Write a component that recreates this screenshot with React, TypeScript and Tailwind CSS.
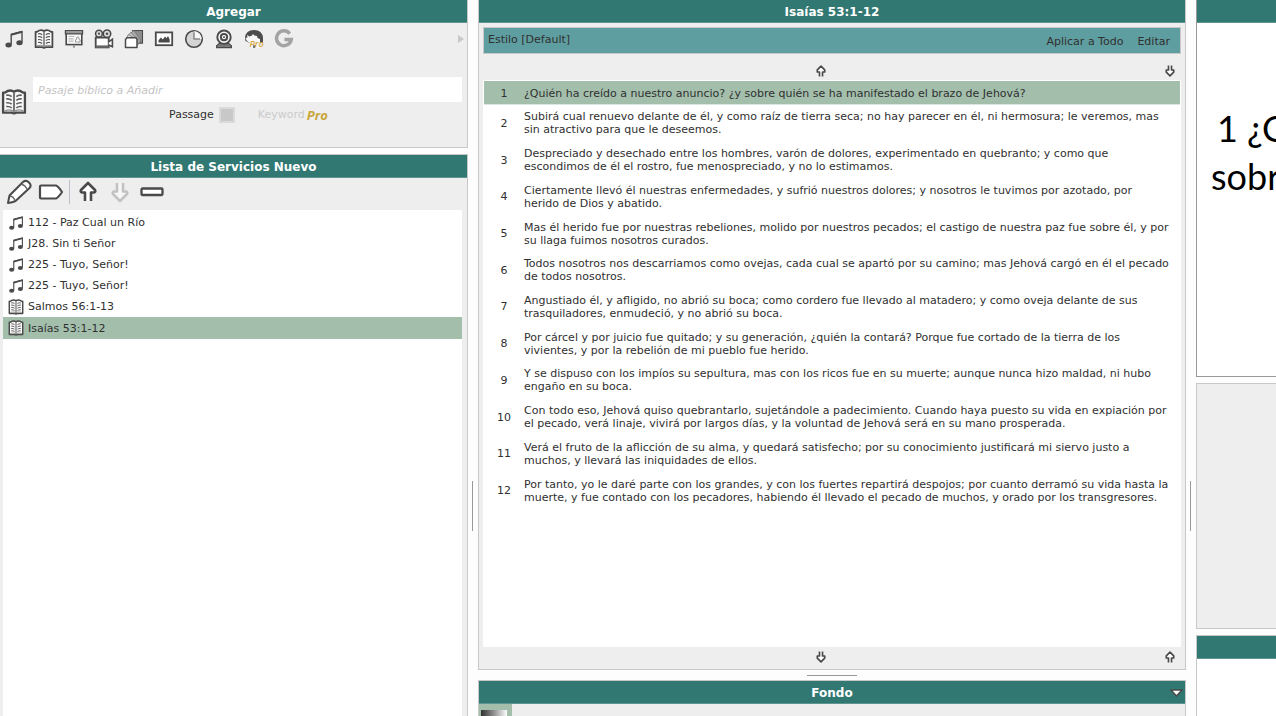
import React from "react";

type IconProps = { className?: string };

const INK = "#4a4a4a";

function MusicIcon({ className = "h-5 w-5" }: IconProps) {
  return (
    <svg viewBox="0 0 20 20" className={className} aria-hidden="true">
      <path d="M7.200 15.500V5.500L18 2.600v10.600" fill="none" stroke={INK} strokeWidth="1.400" />
      <path d="M7 5.700l11-2.900" stroke={INK} strokeWidth="2.200" />
      <ellipse cx="4.600" cy="16" rx="3.200" ry="2.500" fill={INK} />
      <ellipse cx="15.500" cy="13.800" rx="3.200" ry="2.500" fill={INK} />
    </svg>
  );
}

function BookIcon({ className = "h-5 w-5" }: IconProps) {
  return (
    <svg viewBox="0 0 20 20" className={className} aria-hidden="true">
      <path d="M1.600 2.800H3Q7-.2 10 2.200 13-.2 17 2.800h1.400v15.400H12l-2 .6-2-.6H1.600Z" fill="#fafafa" stroke={INK} strokeWidth="1.800" strokeLinejoin="round" />
      <path d="M10 2.400v15" stroke="#777" strokeWidth="1.600" />
      <path d="M3 16.800q4-1.600 7 .6 3-2.200 7-.6" fill="none" stroke="#8a8a8a" strokeWidth="1" />
      <path d="M4 4.800q2.600-.4 4.200 1M4 7.700q2.600-.4 4.200 1M4 10.600q2.600-.4 4.200 1M4 13.500q2.600-.4 4.200 1M11.800 5.800q1.600-1.400 4.200-1M11.800 8.700q1.600-1.400 4.200-1M11.800 11.600q1.600-1.400 4.200-1M11.800 14.500q1.600-1.400 4.200-1" fill="none" stroke="#5f5f5f" strokeWidth="1.200" />
    </svg>
  );
}

function SlideIcon() {
  return (
    <svg viewBox="0 0 20 20" className="h-5 w-5" aria-hidden="true">
      <rect x="2.200" y="3" width="15.600" height="12.600" fill="#f8f8f8" stroke={INK} strokeWidth="1.600" />
      <path d="M1.400 1.500h17.200v3.300H1.400z" fill="#999" stroke={INK} strokeWidth="1.200" />
      <path d="M4.500 7.500h6M4.500 9.800h5M4.500 12.200h5" stroke="#bbb" strokeWidth="1.200" />
      <path d="M11.500 13h4.600v-2.200h-.8L14.500 8h-1.400l-.8 2.800h-.8z" fill="#fff" stroke="#999" />
      <path d="M9 16.200h2v2.600H9z" fill="#999" />
    </svg>
  );
}

function CameraIcon() {
  return (
    <svg viewBox="0 0 20 20" className="h-5 w-5" aria-hidden="true">
      <rect x="1.700" y="8.600" width="13" height="9.800" fill="#fff" stroke={INK} strokeWidth="1.800" />
      <path d="M1.700 17.600h13" stroke="#666" strokeWidth="2.400" />
      <path d="M14.800 12.800l3.600-2.600v7.600l-3.600-1.800" fill="#fff" stroke={INK} strokeWidth="1.600" />
      <circle cx="5" cy="4.700" r="3.400" fill="#ddd" stroke={INK} strokeWidth="1.600" />
      <circle cx="13" cy="4.700" r="3.700" fill="#ddd" stroke={INK} strokeWidth="1.600" />
      <circle cx="5" cy="4.700" r="1.100" fill={INK} />
      <circle cx="13" cy="4.700" r="1.200" fill={INK} />
    </svg>
  );
}

function FoldersIcon() {
  return (
    <svg viewBox="0 0 20 20" className="h-5 w-5" aria-hidden="true">
      <path d="M8.500 1.500h10v12.600h-5z" fill="#8d8d8d" stroke={INK} strokeWidth="1.100" />
      <path d="M6 4.500l4-3L17 12l-3.500 4z" fill="#aaa" stroke="#777" strokeWidth=".8" />
      <path d="M3.500 7l3.200-3.600L15.500 12l-2 4z" fill="#c6c6c6" stroke="#777" strokeWidth=".8" />
      <path d="M2.500 9l2-3.200 9.500 5-1 4z" fill="#ddd" stroke="#777" strokeWidth=".8" />
      <path d="M1.500 18.500V10.500L3 8.800h9l1 1.600v8.100z" fill="#fff" stroke={INK} strokeWidth="1.500" strokeLinejoin="round" />
    </svg>
  );
}

function ImageIcon() {
  return (
    <svg viewBox="0 0 20 20" className="h-5 w-5" aria-hidden="true">
      <rect x="1.800" y="3.400" width="16.400" height="12.800" fill="#fff" stroke={INK} strokeWidth="1.800" />
      <path d="M4.500 13.600v-2.400L7 8.400l1.800 2 2.200-3 1.500 1.800L14 7l1.700 3.600v3z" fill={INK} />
    </svg>
  );
}

function ClockIcon() {
  return (
    <svg viewBox="0 0 20 20" className="h-5 w-5" aria-hidden="true">
      <circle cx="10" cy="10" r="8.300" fill="#d4d4d4" stroke={INK} strokeWidth="1.600" />
      <path d="M10 10V2.300A7.700 7.700 0 0 1 17.700 10z" fill="#f6f6f6" />
      <path d="M10 3.200V10h6" fill="none" stroke="#888" strokeWidth="1.500" />
    </svg>
  );
}

function WebcamIcon() {
  return (
    <svg viewBox="0 0 20 20" className="h-5 w-5" aria-hidden="true">
      <path d="M2.600 18.600v-1.800l2.800-2.400h9.200l2.800 2.400v1.800z" fill="#777" stroke={INK} strokeWidth="1.200" />
      <circle cx="10" cy="8.200" r="6.700" fill="#f4f4f4" stroke={INK} strokeWidth="1.900" />
      <circle cx="10" cy="8.200" r="3.100" fill="#fff" stroke={INK} strokeWidth="2" />
      <circle cx="10" cy="8.200" r="1" fill={INK} />
    </svg>
  );
}

function GlobeProIcon() {
  return (
    <svg viewBox="0 0 20 20" className="h-5 w-5" aria-hidden="true">
      <path d="M1 9Q1.600 1 10 1t9 8v5H6L1.500 12z" fill="#4d4d4d" />
      <path d="M3 6l2.500 1.500L8 6.500l1-1.500 1.500 1.500L13 7l.5 2 2.500 1v9H7.500L6 14l-3-2-1.500-3 2-.5z" fill="#f8f8f8" />
      <path d="M9 16l3 .5-1 2.500H9z" fill="#777" />
      <text x="5.500" y="17.600" fontFamily="Open Sans, sans-serif" fontSize="9" fontStyle="italic" fontWeight="600" fill="#d5a63c">Pro</text>
    </svg>
  );
}

function GoogleIcon() {
  return (
    <svg viewBox="0 0 20 20" className="h-5 w-5" aria-hidden="true">
      <path d="M15.700 4.600A7.400 7.400 0 1 0 17.200 10.600H10.400" fill="none" stroke="#a3a3a3" strokeWidth="3.500" />
    </svg>
  );
}

function ArrowIcon({ down = false, pale = false }: { down?: boolean; pale?: boolean }) {
  return (
    <svg viewBox="0 0 18 22" className={down ? "h-[22px] w-[18px] rotate-180" : "h-[22px] w-[18px]"} aria-hidden="true">
      <path d="M6 20V11.500H3Q1 10.800 2 9L9 2 16 9Q17 10.800 15 11.500H12V20" fill={pale ? "#f6f6f6" : "#fff"} stroke={pale ? "#c2c2c2" : INK} strokeWidth="2.600" strokeLinejoin="round" />
    </svg>
  );
}

function SmallArrow({ down = false }: { down?: boolean }) {
  return (
    <svg viewBox="0 0 10 12" className={down ? "h-3 w-2.5 rotate-180" : "h-3 w-2.5"} aria-hidden="true">
      <path d="M3.500 11.600V7H1.300V4.800L5 1.200 8.700 4.800V7H6.500V11.600" fill="#fff" stroke={INK} strokeWidth="1.700" strokeLinejoin="round" />
    </svg>
  );
}

const verses = [
  "¿Quién ha creído a nuestro anuncio? ¿y sobre quién se ha manifestado el brazo de Jehová?",
  "Subirá cual renuevo delante de él, y como raíz de tierra seca; no hay parecer en él, ni hermosura; le veremos, mas sin atractivo para que le deseemos.",
  "Despreciado y desechado entre los hombres, varón de dolores, experimentado en quebranto; y como que escondimos de él el rostro, fue menospreciado, y no lo estimamos.",
  "Ciertamente llevó él nuestras enfermedades, y sufrió nuestros dolores; y nosotros le tuvimos por azotado, por herido\u00a0de Dios y abatido.",
  "Mas él herido fue por nuestras rebeliones, molido por nuestros pecados; el castigo de nuestra paz fue sobre él, y por su llaga fuimos nosotros curados.",
  "Todos nosotros nos descarriamos como ovejas, cada cual se apartó por su camino; mas Jehová cargó en él el pecado de todos nosotros.",
  "Angustiado él, y afligido, no abrió su boca; como cordero fue llevado al matadero; y como oveja delante de sus trasquiladores, enmudeció, y no abrió su boca.",
  "Por cárcel y por juicio fue quitado; y su generación, ¿quién la contará? Porque fue cortado de la tierra de los vivientes, y por la rebelión de mi pueblo fue herido.",
  "Y se dispuso con los impíos su sepultura, mas con los ricos fue en su muerte; aunque nunca hizo maldad, ni hubo engaño en su boca.",
  "Con todo eso, Jehová quiso quebrantarlo, sujetándole a padecimiento. Cuando haya puesto su vida en expiación por el pecado, verá linaje, vivirá por largos días, y la voluntad de Jehová será en su mano prosperada.",
  "Verá el fruto de la aflicción de su alma, y quedará satisfecho; por su conocimiento justificará mi siervo justo a muchos, y llevará las iniquidades de ellos.",
  "Por tanto, yo le daré parte con los grandes, y con los fuertes repartirá despojos; por cuanto derramó su vida hasta la muerte, y fue contado con los pecadores, habiendo él llevado el pecado de muchos, y orado por los transgresores.",
];

const services = [
  { kind: "song", title: "112 - Paz Cual un Río" },
  { kind: "song", title: "J28. Sin ti Señor" },
  { kind: "song", title: "225 - Tuyo, Señor!" },
  { kind: "song", title: "225 - Tuyo, Señor!" },
  { kind: "bible", title: "Salmos 56:1-13" },
  { kind: "bible", title: "Isaías 53:1-12" },
];

const sources = [
  { label: "Canción", Icon: MusicIcon },
  { label: "Biblia", Icon: BookIcon },
  { label: "Presentación", Icon: SlideIcon },
  { label: "Video", Icon: CameraIcon },
  { label: "Carpetas", Icon: FoldersIcon },
  { label: "Imagen", Icon: ImageIcon },
  { label: "Reloj", Icon: ClockIcon },
  { label: "Cámara", Icon: WebcamIcon },
  { label: "Web", Icon: GlobeProIcon },
  { label: "Google", Icon: GoogleIcon },
];

function Title({ children }: { children?: React.ReactNode }) {
  return (
    <h2 className="flex h-[23px] shrink-0 items-center justify-center border-b border-[#5f9590] bg-[#317873] pt-0.5 text-[12px] font-bold text-white">
      {children}
    </h2>
  );
}

function VerseRow({ index, text, selected }: { index: number; text: string; selected?: boolean }) {
  return (
    <button
      className={
        selected
          ? "grid h-6 w-full grid-cols-[40px_minmax(0,1fr)] items-center border-b border-[#dbe7de] bg-[#a3bfac] pt-px pr-1 text-left leading-[13px]"
          : "grid h-full w-full grid-cols-[40px_minmax(0,1fr)] items-center pr-1 text-left leading-[13px]"
      }
    >
      <span className="text-center">{index}</span>
      <span>{text}</span>
    </button>
  );
}

export default function App() {
  return (
    <div className="grid h-screen min-h-[700px] grid-cols-[468px_10px_minmax(0,1fr)_10px_80px] overflow-hidden bg-[#fdfdfd] font-['DejaVu_Sans',sans-serif] text-[11px] text-[#303030]">
      <aside className="flex min-h-0 flex-col">
        <section className="h-[148px] shrink-0 border-r border-b border-[#c8c8c8] bg-[#eee]">
          <Title>Agregar</Title>
          <div className="flex h-8 items-center gap-2.5 pl-1">
            {sources.map(({ label, Icon }) => (
              <button key={label} aria-label={label}>
                <Icon />
              </button>
            ))}
            <button aria-label="Más" className="mr-0.5 ml-auto">
              <svg viewBox="0 0 8 10" className="h-2.5 w-2" aria-hidden="true">
                <path d="M1 1l6 4-6 4z" fill="#c8c8c8" />
              </svg>
            </button>
          </div>
          <div className="mt-[22px] flex items-start pr-[5px]">
            <BookIcon className="mt-3 mr-1.5 ml-px h-[26px] w-[26px] shrink-0" />
            <input
              aria-label="Pasaje bíblico a Añadir"
              placeholder="Pasaje bíblico a Añadir"
              className="h-[25px] min-w-0 flex-1 bg-white px-[5px] pt-px italic outline-none placeholder:text-[#c4c4c4]"
            />
          </div>
          <div className="-mt-2 flex items-center pl-[169px]">
            <label htmlFor="passage">Passage</label>
            <input id="passage" type="checkbox" className="mr-[23px] ml-[5px] h-4 w-4 appearance-none border-2 border-[#dadada] bg-[#c8c8c8]" />
            <span className="text-[#cbcbcb]">Keyword</span>
            <span className="ml-0.5 font-['Open_Sans',sans-serif] text-[13px] leading-4 font-bold text-[#c9a63c] italic">Pro</span>
          </div>
        </section>

        <section className="mt-1.5 flex min-h-0 flex-1 flex-col border-t border-r border-[#c8c8c8] bg-[#eee] pr-[5px]">
          <div className="-mr-[5px]">
            <Title>Lista de Servicios Nuevo</Title>
          </div>
          <div className="flex h-8 shrink-0 items-center pb-1 pl-1.5">
            <button aria-label="Editar elemento">
              <svg viewBox="0 0 26 26" className="h-[26px] w-[26px]" aria-hidden="true">
                <path d="M2 24l1.500-7.500L17 3q3-2.500 6 .5t.5 5.500L9.500 22q-3 1.500-7.500 2z" fill="#fff" stroke={INK} strokeWidth="2" strokeLinejoin="round" />
                <path d="M16 5.500q3 .5 5 4.500M4 17q3.500.5 5 4.500" fill="none" stroke="#666" strokeWidth="1.300" />
              </svg>
            </button>
            <button aria-label="Etiqueta" className="ml-1.5">
              <svg viewBox="0 0 26 18" className="h-[18px] w-[26px]" aria-hidden="true">
                <path d="M3 2.500h15Q20 3 24 9q-4 6-6 6.500H3q-1 0-1-1v-11q0-1 1-1z" fill="#fff" stroke={INK} strokeWidth="2.200" strokeLinejoin="round" />
              </svg>
            </button>
            <div className="ml-[5px] h-6 w-px bg-[#bcc0c8]" />
            <button aria-label="Subir" className="ml-[9px]"><ArrowIcon /></button>
            <button aria-label="Bajar" className="ml-3.5"><ArrowIcon down pale /></button>
            <button aria-label="Quitar" className="ml-[11px]">
              <svg viewBox="0 0 24 10" className="h-2.5 w-6" aria-hidden="true">
                <rect x="1.500" y="1.500" width="21" height="6.500" rx="1" fill="#fff" stroke={INK} strokeWidth="2.300" />
              </svg>
            </button>
          </div>
          <ul className="ml-[3px] min-h-0 flex-1 bg-white pt-0.5">
            {services.map((item, i) => (
              <li key={i}>
                <button className={i === 5 ? "flex h-[22px] w-full items-center gap-1 bg-[#a3bfac] pl-[5px] text-left" : "flex h-[21px] w-full items-center gap-1 pl-[5px] text-left"}>
                  {item.kind === "song" ? <MusicIcon className="h-4 w-4" /> : <BookIcon className="h-4 w-4" />}
                  <span className="pt-0.5">{item.title}</span>
                </button>
              </li>
            ))}
          </ul>
        </section>
      </aside>

      <div className="flex justify-center pr-px">
        <div className="mt-[481px] h-[50px] w-px bg-[#999]" />
      </div>

      <main className="flex min-h-0 flex-col">
        <section className="flex min-h-0 flex-1 flex-col border-x border-b border-[#c8c8c8] bg-[#eee]">
          <Title>Isaías 53:1-12</Title>
          <div className="mx-1 mt-1 flex h-[27px] shrink-0 items-center border border-[#c8c8c8] bg-[#5f9ea0] px-1">
            <span className="pb-px">Estilo [Default]</span>
            <button className="ml-auto pt-[3px]">Aplicar a Todo</button>
            <button className="mr-1.5 ml-3.5 pt-[3px]">Editar</button>
          </div>
          <div className="grid h-[26px] shrink-0 grid-cols-[1fr_auto_1fr] items-center pt-2 pr-2.5">
            <span />
            <button aria-label="Anterior" className="mr-3"><SmallArrow /></button>
            <button aria-label="Al final" className="justify-self-end"><SmallArrow down /></button>
          </div>
          <div className="mr-1 ml-1 min-h-0 flex-1 overflow-hidden border border-white bg-white">
            <VerseRow index={1} text={verses[0]} selected />
            <ul className="grid h-[404px] auto-rows-fr">
              {verses.slice(1).map((verse, i) => (
                <li key={verse}>
                  <VerseRow index={i + 2} text={verse} />
                </li>
              ))}
            </ul>
          </div>
          <div className="grid h-[22px] shrink-0 grid-cols-[1fr_auto_1fr] items-center pr-2.5 pb-0.5">
            <span />
            <button aria-label="Siguiente" className="mr-3"><SmallArrow down /></button>
            <button aria-label="Al inicio" className="justify-self-end"><SmallArrow /></button>
          </div>
        </section>
        <div className="flex h-2.5 shrink-0 items-center justify-center">
          <div className="h-px w-[50px] bg-[#999]" />
        </div>
        <section className="h-9 shrink-0 overflow-hidden border-x border-t border-[#c8c8c8] bg-[#eee]">
          <div className="relative">
            <Title>Fondo</Title>
            <button aria-label="Opciones de fondo" className="absolute top-2 right-0.5">
              <svg viewBox="0 0 13 8" className="h-2 w-[13px]" aria-hidden="true">
                <path d="M1 1h11L6.500 7z" fill="#fff" stroke={INK} strokeWidth="1.500" />
              </svg>
            </button>
          </div>
          <button aria-label="Fondo degradado" className="block w-[33px] bg-[#a3bfac] pt-1.5 pr-[5px] pl-0.5">
            <span className="block h-8 bg-linear-to-r from-[#333] to-white" />
          </button>
        </section>
      </main>

      <div className="flex justify-center pr-px">
        <div className="mt-[481px] h-[50px] w-px bg-[#999]" />
      </div>

      <aside className="flex min-h-0 flex-col gap-1.5 overflow-hidden">
        <section className="h-[377px] shrink-0 border-b border-l border-[#999] bg-white">
          <Title />
          <p className="mt-[81px] pl-3.5 font-['Lato',sans-serif] text-[36px] leading-[48px] whitespace-nowrap text-black">
            <span className="block pl-1.5">1 ¿Quién</span>
            <span className="block">sobre</span>
          </p>
        </section>
        <section className="h-[246px] shrink-0 border-y border-l border-[#c8c8c8] bg-[#eee]" />
        <section className="flex-1 border-t border-l border-[#c8c8c8] bg-white">
          <Title />
        </section>
      </aside>
    </div>
  );
}
